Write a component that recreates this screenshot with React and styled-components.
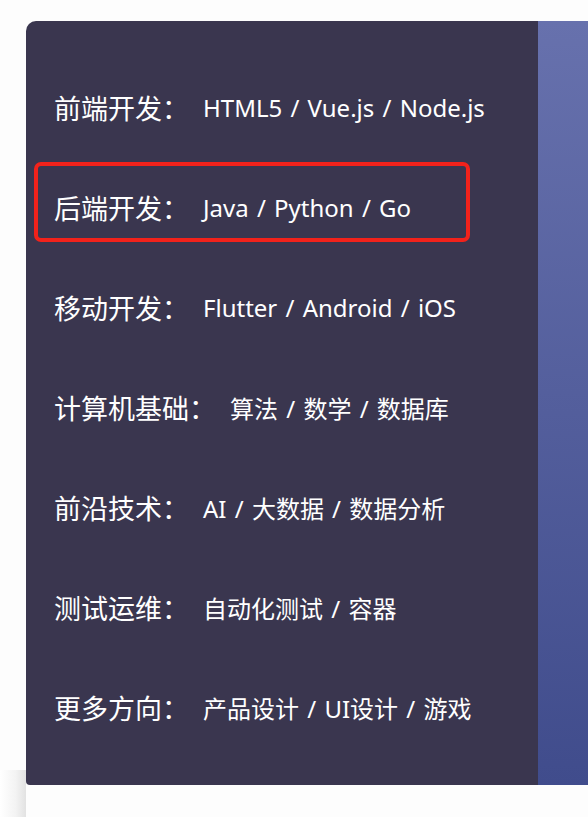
import React from "react"
import styled, { createGlobalStyle } from "styled-components"

const GlobalStyle = createGlobalStyle`
  html, body {
    margin: 0;
    padding: 0;
    background: #fdfdfd;
    overflow: hidden;
  }
  body {
    font-family: "Noto Sans CJK SC", "Noto Sans", sans-serif;
  }
`

const Page = styled.div`
  position: relative;
  display: flex;
  padding: 21px 0 0 26px;
  height: 817px;
  box-sizing: border-box;

  /* faint shadow of the card underneath */
  &::before {
    content: "";
    position: absolute;
    left: 0;
    top: 770px;
    width: 26px;
    height: 47px;
    background: linear-gradient(90deg, #ffffff 0%, #f3f3f3 60%, #e2e2e2 100%);
  }
`

const Menu = styled.ul`
  list-style: none;
  margin: 0;
  padding: 36px 0 28px 28px;
  width: 512px;
  height: 764px;
  box-sizing: border-box;
  background: #3a364f;
  border-radius: 10px 0 0 4px;
  flex-shrink: 0;
`

const Banner = styled.div`
  flex: 1;
  height: 764px;
  background: linear-gradient(180deg, #6771ad 0%, #404c8c 100%);
`

const Row = styled.li`
  position: relative;
  display: flex;
  align-items: center;
  height: 100px;
  color: #ffffff;

  ${({ $active }) =>
    $active &&
    `
    &::after {
      content: "";
      position: absolute;
      left: -20px;
      top: 5px;
      width: 436px;
      height: 80px;
      box-sizing: border-box;
      border: 4px solid #f2221b;
      border-radius: 7px;
    }
  `}
`

const Label = styled.span`
  font-size: 27px;
  margin-right: 14px;
  white-space: nowrap;
`

const Value = styled.span`
  font-family: "Noto Sans", "Noto Sans CJK SC", sans-serif;
  font-size: 24px;
  word-spacing: 2px;
  white-space: nowrap;
`

const items = [
  { label: "前端开发：", value: "HTML5 / Vue.js / Node.js" },
  { label: "后端开发：", value: "Java / Python / Go", active: true },
  { label: "移动开发：", value: "Flutter / Android / iOS" },
  { label: "计算机基础：", value: "算法 / 数学 / 数据库" },
  { label: "前沿技术：", value: "AI / 大数据 / 数据分析" },
  { label: "测试运维：", value: "自动化测试 / 容器" },
  { label: "更多方向：", value: "产品设计 / UI设计 / 游戏" },
]

export default function App() {
  return (
    <>
      <GlobalStyle />
      <Page>
        <Menu>
          {items.map((item) => (
            <Row key={item.label} $active={item.active}>
              <Label>{item.label}</Label>
              <Value>{item.value}</Value>
            </Row>
          ))}
        </Menu>
        <Banner />
      </Page>
    </>
  )
}
